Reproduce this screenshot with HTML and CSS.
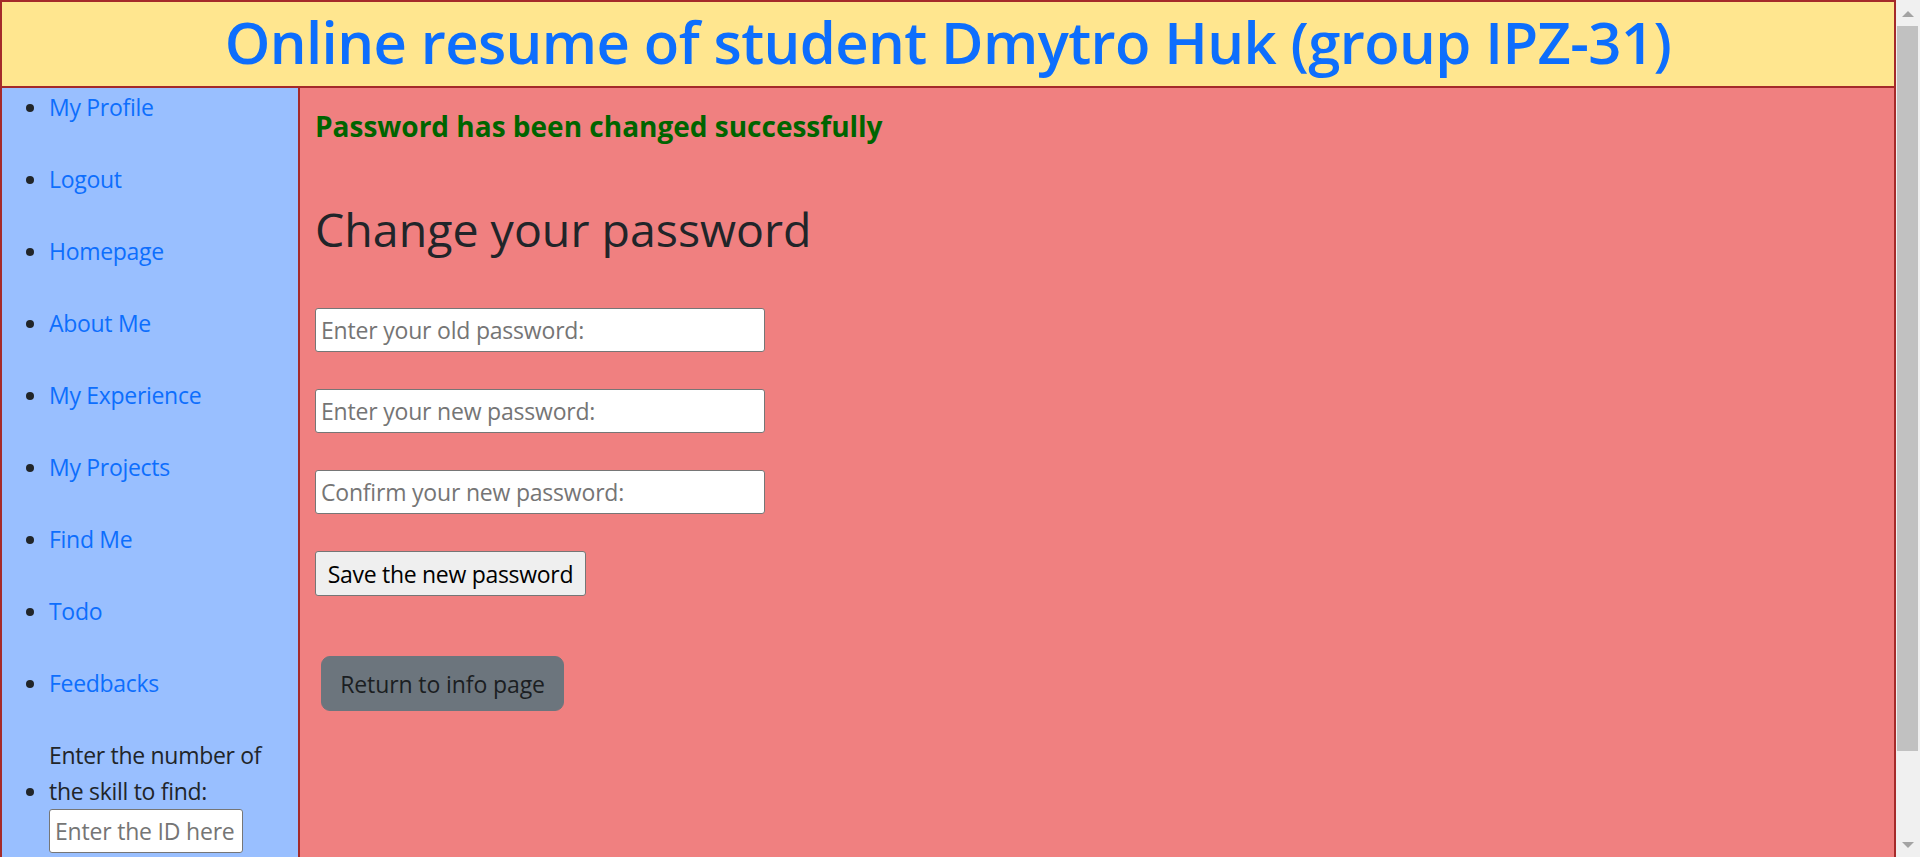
FILE: index.html
```html
<!DOCTYPE html>
<html lang="en">
<head>
<meta charset="utf-8">
<title>Change password</title>
<link rel="stylesheet" href="styles.css">
</head>
<body>
<div class="viewport">
  <div class="page">
    <header class="site-header">
      <h1 class="site-title">Online resume of student Dmytro Huk (group IPZ-31)</h1>
    </header>
    <div class="layout">
      <nav class="sidebar">
        <ul class="nav-list">
          <li><a href="#">My Profile</a></li>
          <li><a href="#">Logout</a></li>
          <li><a href="#">Homepage</a></li>
          <li><a href="#">About Me</a></li>
          <li><a href="#">My Experience</a></li>
          <li><a href="#">My Projects</a></li>
          <li><a href="#">Find Me</a></li>
          <li><a href="#">Todo</a></li>
          <li><a href="#">Feedbacks</a></li>
          <li class="skill-item">
            <label class="skill-label" for="skill-id">Enter the number of the skill to find:</label>
            <input class="field skill-input" id="skill-id" type="text" placeholder="Enter the ID here">
          </li>
        </ul>
      </nav>
      <main class="content">
        <h5 class="success">Password has been changed successfully</h5>
        <h2 class="form-title">Change your password</h2>
        <form class="pw-form">
          <input class="field pw-input" type="password" placeholder="Enter your old password:">
          <input class="field pw-input" type="password" placeholder="Enter your new password:">
          <input class="field pw-input" type="password" placeholder="Confirm your new password:">
          <button class="save-btn" type="button">Save the new password</button>
        </form>
        <a class="return-btn" href="#">Return to info page</a>
      </main>
    </div>
  </div>
  <div class="scrollbar" aria-hidden="true">
    <div class="sb-button"><span class="sb-arrow-up"></span></div>
    <div class="sb-track"><div class="sb-thumb"></div></div>
    <div class="sb-button sb-button-down"><span class="sb-arrow-down"></span></div>
  </div>
</div>
</body>
</html>
```
FILE: styles.css
```css
html, body {
  margin: 0;
  padding: 0;
}

body {
  font-family: "Open Sans", "Noto Sans", "Liberation Sans", sans-serif;
  font-size: 23px;
  letter-spacing: -0.3px;
  line-height: 36px;
  color: #212529;
  background: #ffffff;
}

.viewport {
  display: flex;
  height: 857px;
  overflow: hidden;
}

.page {
  flex: 1;
  min-width: 0;
  overflow: hidden;
}

/* Header */
.site-header {
  background: #ffe68f;
  border: 2px solid #a52a2a;
  text-align: center;
}

.site-title {
  margin: 4px 0 8px;
  font-size: 58px;
  letter-spacing: -0.6px;
  line-height: 72px;
  font-weight: 600;
  color: #0d6efd;
}

/* Body layout */
.layout {
  display: flex;
  align-items: stretch;
}

.sidebar {
  box-sizing: border-box;
  width: 300px;
  flex: none;
  background: #99bfff;
  border-left: 2px solid #a52a2a;
  border-right: 2px solid #a52a2a;
}

.nav-list {
  margin: 0;
  padding: 1px 0 60px 47px;
  list-style: disc;
}

.nav-list li {
  margin-bottom: 36px;
}

.nav-list a {
  color: #0d6efd;
  text-decoration: none;
}

.skill-label {
  display: inline-block;
}

.skill-input {
  display: block;
  width: 194px;
}

.content {
  flex: 1;
  min-width: 0;
  background: #f08080;
  border-right: 2px solid #a52a2a;
  padding: 20px 15px 18px;
}

.success {
  margin: 0 0 12px;
  font-size: 28px;
  letter-spacing: 0;
  line-height: 36px;
  font-weight: 700;
  color: #006400;
}

.form-title {
  margin: 57px 0 49px;
  font-size: 46.5px;
  letter-spacing: 0;
  line-height: 57.6px;
  font-weight: 500;
  color: #212529;
}

.pw-form {
  display: flex;
  flex-direction: column;
  align-items: flex-start;
  gap: 37px;
  margin: 0;
}

.field {
  box-sizing: border-box;
  height: 44px;
  padding: 0 5px;
  font: inherit;
  font-size: 23px;
  letter-spacing: -0.2px;
  color: #000;
  background: #fff;
  border: 1px solid #767676;
  border-radius: 3px;
}

.field::placeholder {
  color: #757575;
  opacity: 1;
}

.pw-input {
  width: 450px;
}

.save-btn {
  box-sizing: border-box;
  width: 271px;
  height: 45px;
  padding: 1px 0 0;
  font: inherit;
  font-size: 23px;
  letter-spacing: -0.3px;
  color: #000;
  background: #efefef;
  border: 1px solid #767676;
  border-radius: 3px;
}

.return-btn {
  box-sizing: border-box;
  display: inline-block;
  width: 243px;
  height: 55px;
  margin: 60px 0 0 6px;
  padding: 9px 0 7px;
  text-align: center;
  font-size: 23px;
  letter-spacing: -0.1px;
  line-height: 36px;
  color: #1b1e22;
  text-decoration: none;
  background: #6c757d;
  border: 1.5px solid #6c757d;
  border-radius: 9px;
}

/* Window scrollbar */
.scrollbar {
  width: 24px;
  flex: none;
  display: flex;
  flex-direction: column;
  background: #f0f0f0;
}

.sb-button {
  height: 25px;
  flex: none;
  display: flex;
  justify-content: center;
  align-items: flex-start;
  padding-top: 11px;
  box-sizing: border-box;
}

.sb-button-down {
  padding-top: 10px;
}

.sb-arrow-up {
  width: 0;
  height: 0;
  border-left: 6px solid transparent;
  border-right: 6px solid transparent;
  border-bottom: 6px solid #a3a3a3;
}

.sb-arrow-down {
  width: 0;
  height: 0;
  border-left: 6px solid transparent;
  border-right: 6px solid transparent;
  border-top: 6px solid #a3a3a3;
}

.sb-track {
  flex: 1;
  padding: 1px 2px 0 1px;
}

.sb-thumb {
  height: 725px;
  background: #c1c1c1;
}
```
